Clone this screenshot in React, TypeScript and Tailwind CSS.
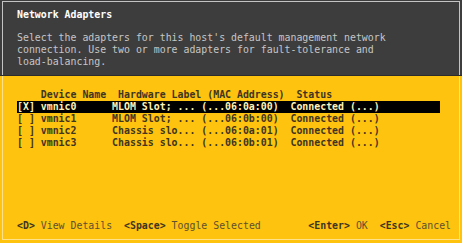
const rows = [
  { sel: true, text: "[X] vmnic0      MLOM Slot; ... (...06:0a:00)  Connected (...)" },
  { sel: false, text: "[ ] vmnic1      MLOM Slot; ... (...06:0b:00)  Connected (...)" },
  { sel: false, text: "[ ] vmnic2      Chassis slo... (...06:0a:01)  Connected (...)" },
  { sel: false, text: "[ ] vmnic3      Chassis slo... (...06:0b:01)  Connected (...)" },
];

export default function App() {
  return (
    <div className="w-[462px] h-[243px] flex flex-col overflow-hidden font-['DejaVu_Sans_Mono',monospace] text-[9.88px] leading-[12px]">
      {/* dark header panel */}
      <div className="h-[76px] bg-[#3d3d3d] pt-[1px] px-[2px] border-b border-[#2c2c2c]">
        <div className="h-full border-t border-l border-r border-[#c4c4c4] pl-[14px] pt-[7px]">
          <div className="font-bold text-white whitespace-pre">Network Adapters</div>
          <div className="mt-[11px] text-[#c6c6c6] whitespace-pre">
            <div>Select the adapters for this host's default management network</div>
            <div>connection. Use two or more adapters for fault-tolerance and</div>
            <div>load-balancing.</div>
          </div>
        </div>
      </div>

      {/* yellow body */}
      <div className="flex-1 bg-[#fdc30f] px-[2px] pb-[3px]">
        <div className="h-full flex flex-col border-l border-r border-b border-[#ffe28a] pl-[14px] pt-[13px] pb-[7px]">
          <div className="font-bold text-[#3e3522] whitespace-pre">
            {"    Device Name  Hardware Label (MAC Address)  Status"}
          </div>
          {rows.map((r) => (
            <div
              key={r.text}
              className={
                r.sel
                  ? "w-[423px] bg-black text-[#fff1b8] font-bold whitespace-pre"
                  : "w-[423px] text-[#3e3522] font-bold whitespace-pre"
              }
            >
              {r.text}
            </div>
          ))}
          <div className="mt-auto flex whitespace-pre text-[#5e5030]">
            <span className="font-bold text-[#3e3522]">&lt;D&gt;</span>
            <span> View Details  </span>
            <span className="font-bold text-[#3e3522]">&lt;Space&gt;</span>
            <span> Toggle Selected</span>
            <span>{"        "}</span>
            <span className="font-bold text-[#3e3522]">&lt;Enter&gt;</span>
            <span> OK  </span>
            <span className="font-bold text-[#3e3522]">&lt;Esc&gt;</span>
            <span> Cancel</span>
          </div>
        </div>
      </div>
    </div>
  );
}
